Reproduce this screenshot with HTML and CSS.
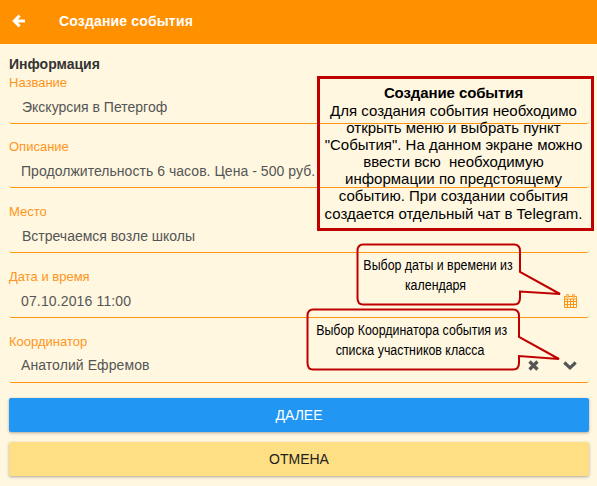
FILE: index.html
```html
<!DOCTYPE html>
<html lang="ru">
<head>
<meta charset="utf-8">
<title>Создание события</title>
<link rel="stylesheet" href="styles.css">
</head>
<body>
<header class="bar">
  <svg class="back" width="14" height="14" viewBox="0 0 14 14"><path d="M13 7H3M7.6 1.600L2.300 7l5.300 5.400" fill="none" stroke="#fff" stroke-width="3"/></svg>
  <h1>Создание события</h1>
</header>
<main class="form">
  <h2>Информация</h2>
  <div class="field"><label>Название</label><div class="control inset"><span>Экскурсия в Петергоф</span></div></div>
  <div class="field"><label>Описание</label><div class="control"><span class="wide">Продолжительность 6 часов. Цена - 500 руб.</span></div></div>
  <div class="field"><label>Место</label><div class="control inset"><span>Встречаемся возле школы</span></div></div>
  <div class="field"><label>Дата и время</label><div class="control"><span class="date-value">07.10.2016 11:00</span>
    <svg class="calendar" width="14" height="14" viewBox="0 0 14 14" fill="none" stroke="#ff9412"><path d="M.5 2.5h12v11H.5zM1 5h11M1 7.5h11M1 10.5h11M3.5 5v8.5M6.5 5v8.5M9.5 5v8.5"/><path d="M3.5 .3v3.2M9.5 .3v3.2" stroke-width="2.4"/><path d="M3.5 1v2M9.5 1v2" stroke="#fff7e0" stroke-width=".6"/></svg>
  </div></div>
  <div class="field"><label>Координатор</label><div class="control raised"><span class="person-value">Анатолий Ефремов</span>
    <svg class="clear" width="11" height="11" viewBox="0 0 11 11"><path d="M1.500 1.500l8 8M9.500 1.500l-8 8" stroke="#555" stroke-width="3.300"/></svg>
    <svg class="chevron" width="14" height="9" viewBox="0 0 14 9"><path d="M1.300 1.500L7 6.800l5.700-5.300" fill="none" stroke="#555" stroke-width="3.100"/></svg>
  </div></div>
  <button class="btn primary">ДАЛЕЕ</button>
  <button class="btn secondary">ОТМЕНА</button>
</main>
<aside class="note">
  <b>Создание события</b>
  <p>Для создания события необходимо<br>открыть меню и выбрать пункт<br>"События". На данном экране можно<br>ввести всю&nbsp; необходимую<br>информации по предстоящему<br>событию. При создании события<br>создается отдельный чат в Telegram.</p>
</aside>
<aside class="callout date">
  <svg width="206" height="64" viewBox="0 0 206 64"><path d="M7 1.500H158Q164 1.500 164 8V29L204 51L164 48.500V55Q164 61.500 158 61.500H7Q1.500 61.500 1.500 55V8Q1.500 1.500 7 1.500Z"/></svg>
  <p>Выбор даты и времени из<br>календаря</p>
</aside>
<aside class="callout person">
  <svg width="256" height="64" viewBox="0 0 256 64"><path d="M7 1.500H207Q213 1.500 213 8V29L253 51L213 48V55Q213 61.500 207 61.500H7Q1.500 61.500 1.500 55V8Q1.500 1.500 7 1.500Z"/></svg>
  <p>Выбор Координатора события из<br>списка участников класса</p>
</aside>
</body>
</html>
```
FILE: styles.css
```css
* { box-sizing: border-box; }
body { margin: 0; width: 597px; height: 486px; overflow: hidden; position: relative; background: #fff7e0; font-family: "Liberation Sans", Arial, sans-serif; }
h1, h2, p { margin: 0; }
.bar { height: 44px; display: flex; align-items: center; padding: 0 12px 2px; background: #ff9000; color: #fff; }
.bar h1 { font-size: 14px; line-height: 16px; margin-left: 33px; letter-spacing: .16px; }
.form { padding: 11px 8px 0 9px; }
.form h2 { font-size: 14px; line-height: 18px; height: 20px; color: #333; }
.field { height: 49px; margin-bottom: 16px; }
.field:nth-of-type(1) { margin-bottom: 15px; }
.field:nth-of-type(5) { margin-bottom: 15px; }
.field label { display: block; height: 15px; font-size: 13px; line-height: 15px; color: #ff9420; }
.control { height: 34px; display: flex; align-items: center; padding: 0 11px 0 12px; border-bottom: 1px solid #ff9412; border-radius: 3px; color: #555; font-size: 14px; }
.control.inset { padding-left: 13px; }
.control.raised { padding-right: 12px; padding-bottom: 1px; }
.wide { letter-spacing: .04px; }
.date-value { letter-spacing: .14px; }
.person-value { letter-spacing: .08px; }
.calendar { margin-left: auto; }
.clear { margin-left: auto; margin-right: 24px; }
.btn { display: block; width: 580px; height: 34px; padding: 0; border: 0; border-radius: 2px; font: 14px/34px "Liberation Sans", Arial, sans-serif; box-shadow: 0 1px 3px rgba(0,0,0,.32); }
.primary { background: #2196f3; color: #fff; }
.secondary { margin-top: 10px; background: #ffdf84; color: #222; }
.note { position: absolute; left: 317px; top: 76px; width: 277px; height: 155px; padding: 5px 4px 0 0; border: 3px solid #c00000; text-align: center; font-size: 15px; line-height: 17.1px; white-space: nowrap; color: #000; }
.note b { display: block; height: 18px; letter-spacing: -.1px; }
.callout { position: absolute; font-size: 14px; line-height: 20px; text-align: center; color: #000; white-space: nowrap; }
.callout svg { display: block; }
.callout path { fill: none; stroke: #c00000; stroke-width: 2; }
.callout p { position: absolute; top: 12px; left: -2.5px; transform: scaleX(.885); }
.date { left: 356px; top: 243px; }
.date p { width: 163px; }
.person { left: 306px; top: 308px; }
.person p { width: 212px; }
```
